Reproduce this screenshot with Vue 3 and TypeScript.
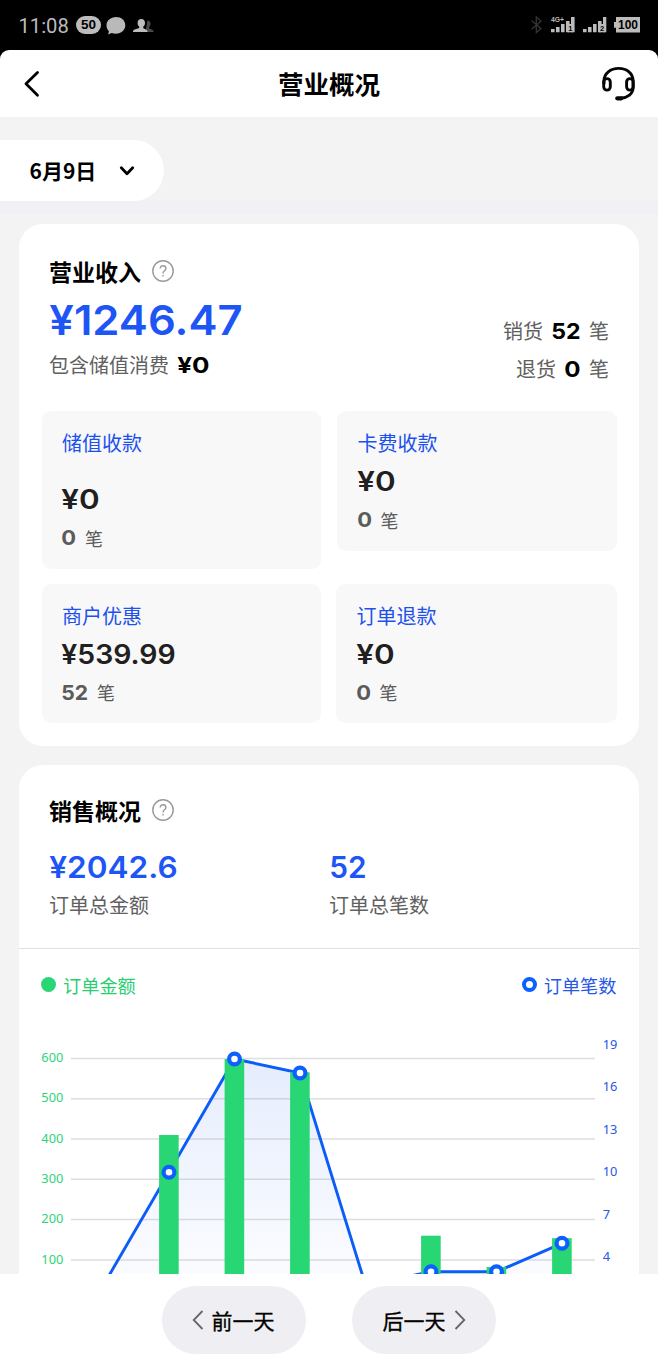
<script setup lang="ts">
import { h } from 'vue'

interface NumProps {
  value: string
  w: number
  cap: number
  weight?: number
}

const Num = (p: NumProps) =>
  h('svg', { width: p.w, height: p.cap, viewBox: `0 0 ${p.w} ${p.cap}`, style: { overflow: 'visible', display: 'block' } }, [
    h('text', {
      x: -0.7,
      y: p.cap,
      'font-family': 'Inter, "Liberation Sans", sans-serif',
      'font-size': p.cap / 0.727,
      'font-weight': p.weight ?? 600,
      fill: 'currentColor',
      textLength: p.w + 1.3,
      lengthAdjust: 'spacingAndGlyphs',
    }, p.value),
  ])
Num.props = ['value', 'w', 'cap', 'weight']

const tiles = [
  { label: '储值收款', amount: '¥0', aw: 37, count: '0', cw: 13.5, kind: 'tall' },
  { label: '卡费收款', amount: '¥0', aw: 37, count: '0', cw: 13.5, kind: 'inset' },
  { label: '商户优惠', amount: '¥539.99', aw: 113, count: '52', cw: 25.5, kind: '' },
  { label: '订单退款', amount: '¥0', aw: 37, count: '0', cw: 13.5, kind: '' },
]

const amountTicks = [600, 500, 400, 300, 200, 100].map((value, i) => ({ value, y: 109.4 + i * 40.3 }))
const countTicks = [19, 16, 13, 10, 7, 4].map((value, i) => ({ value, y: 95.5 + i * 42.5 }))

const points = [
  { x: 84.5, y: 336, top: 340 },
  { x: 150, y: 223.3, top: 186 },
  { x: 215.5, y: 110, top: 110 },
  { x: 281, y: 124, top: 123.3 },
  { x: 346.5, y: 336, top: 340 },
  { x: 412, y: 322.8, top: 286.7 },
  { x: 477.5, y: 322.8, top: 318 },
  { x: 543, y: 294.3, top: 289.2 },
]
const line = points.map((p) => `${p.x},${p.y}`).join(' ')
const area = `${points[0].x},345 ${line} ${points[points.length - 1].x},345`
</script>

<template>
  <div class="screen">
    <div class="status">
      <div class="st-left">
        <span class="time">11:08</span>
        <span class="pill">50</span>
        <svg class="bubble" width="20" height="18" viewBox="0 0 20 18">
          <path d="M10 0C4.700 0 .5 3.600.5 8.300c0 2.500 1 4.500 2.400 6L2.200 17.600l3.500-1.700c1.300.5 2.800.8 4.300.8 5.300 0 9.300-3.600 9.300-8.400S15.300 0 10 0z" fill="#b9b9b9" />
        </svg>
        <svg class="people" width="21" height="14" viewBox="0 0 21 14">
          <path d="M14.500 1.500c2 0 3 1.400 3 3.300 0 1.500-.6 2.600-1.400 3.300v1.300l3.700 1.600c.5.300.7.900.7 1.900h-8z" fill="#4a4a4a" />
          <path d="M8.300 0c2.200 0 3.700 1.600 3.700 3.900 0 1.600-.7 2.900-1.700 3.700v1.700l2.700 1.200c1 .5 1.500 1.200 1.500 2.500H0c0-1.200.4-2 1.600-2.400l4.600-1.500V7.600C5.200 6.800 4.600 5.500 4.600 3.900 4.600 1.600 6.100 0 8.300 0z" fill="#bdbdbd" />
        </svg>
      </div>
      <svg class="st-right" width="112" height="20" viewBox="0 0 112 20">
        <path d="M1.500 5.500l9.500 8-4.700 4V2L11 6.200l-9.500 8" fill="none" stroke="#343434" stroke-width="1.300" />
        <g fill="#bcbcbc">
          <path d="M21 14h3.600v3.300H21zM26 12h3.600v5.300H26zM31 9h3.600v8.300H31zM36 6h3.600v11.300H36zM41 2h3.600v15.300H41z" />
          <path d="M53 14h3.600v3.300H53zM58 12h3.600v5.300H58zM63 9h3.600v8.300H63zM68 6h3.600v11.300H68zM73 2h3.300v15.300H73z" />
          <path d="M38 9h5v8.300h-5zM69 9h6v8.300h-6z" />
          <path d="M86 2h24v15.500H86v-4.700h-2V7h2z" />
          <text x="21" y="6.600" font-family="Liberation Sans, sans-serif" font-size="7" font-weight="700" textLength="13" lengthAdjust="spacingAndGlyphs">4G+</text>
        </g>
        <g fill="#000" font-family="Liberation Sans, sans-serif" font-weight="700">
          <text x="38.300" y="15.800" font-size="7.500">1</text>
          <text x="70" y="15.800" font-size="7.500">2</text>
          <text x="88" y="13.800" font-size="12" textLength="20" lengthAdjust="spacingAndGlyphs">100</text>
        </g>
      </svg>
    </div>

    <header class="header">
      <svg width="36" height="36" viewBox="0 0 36 36" class="back"><path d="M22.500 6.500L11 17.800l11.500 11.400" fill="none" stroke="#000" stroke-width="2.800" stroke-linecap="round" stroke-linejoin="round" /></svg>
      <h1>营业概况</h1>
      <svg width="36" height="38" viewBox="0 0 36 38" class="headset" fill="none" stroke="#050505" stroke-width="2.900">
        <path d="M3 19v-3.300C3 8.300 9.500 3.400 17.700 3.400s14.400 4.800 14.400 12.600v6.500c0 6.500-5.500 10.300-12.600 10.800" />
        <rect x="2.700" y="13.600" width="6.600" height="11.500" rx="3.300" />
        <rect x="25.600" y="13.600" width="6.600" height="11.500" rx="3.300" />
        <path d="M16.300 33.300h4" stroke-width="4.200" stroke-linecap="round" />
      </svg>
    </header>

    <main class="body">
      <button class="date">
        <span>6月9日</span>
        <svg width="16" height="12" viewBox="0 0 16 12"><path d="M2.300 2.800L8 8.800l5.700-6" fill="none" stroke="#000" stroke-width="2.800" stroke-linecap="round" stroke-linejoin="round" /></svg>
      </button>
      <div class="band"></div>

      <section class="card income">
        <div class="title">
          <h2>营业收入</h2>
          <svg width="22" height="22" viewBox="0 0 22 22" fill="none" stroke="#999" stroke-width="1.400"><circle cx="11" cy="11" r="10.200" /><path d="M8.200 8.600c0-1.800 1.100-2.900 2.800-2.900s2.900 1.100 2.900 2.700c0 2.300-2.900 2.300-2.900 5M11 15v1.600" /></svg>
        </div>
        <div class="summary">
          <div>
            <Num class="total" value="¥1246.47" :w="192" :cap="30" />
            <p class="stored"><span>包含储值消费</span><Num value="¥0" :w="31" :cap="16" :weight="700" /></p>
          </div>
          <div class="trades">
            <p><span>销货</span><Num value="52" :w="28" :cap="16" :weight="700" /><span>笔</span></p>
            <p><span>退货</span><Num value="0" :w="15" :cap="16" :weight="700" /><span>笔</span></p>
          </div>
        </div>
        <div class="tiles">
          <div v-for="t in tiles" :key="t.label" class="tile" :class="t.kind">
            <h3>{{ t.label }}</h3>
            <Num class="amount" :value="t.amount" :w="t.aw" :cap="19.500" :weight="570" />
            <p><Num :value="t.count" :w="t.cw" :cap="15" :weight="650" /><span>笔</span></p>
          </div>
        </div>
      </section>

      <section class="card sales">
        <div class="title">
          <h2>销售概况</h2>
          <svg width="22" height="22" viewBox="0 0 22 22" fill="none" stroke="#999" stroke-width="1.400"><circle cx="11" cy="11" r="10.200" /><path d="M8.200 8.600c0-1.800 1.100-2.900 2.800-2.900s2.900 1.100 2.900 2.700c0 2.300-2.900 2.300-2.900 5M11 15v1.600" /></svg>
        </div>
        <div class="stats">
          <div><Num value="¥2042.6" :w="127" :cap="21.500" /><p>订单总金额</p></div>
          <div><Num value="52" :w="36" :cap="21.500" /><p>订单总笔数</p></div>
        </div>
        <div class="plot">
          <div class="legend">
            <span class="lg green"><i></i>订单金额</span>
            <span class="lg blue"><i></i>订单笔数</span>
          </div>
          <svg class="chart" width="620" height="325" viewBox="0 0 620 325">
            <defs>
              <linearGradient id="fade" x1="0" y1="110" x2="0" y2="345" gradientUnits="userSpaceOnUse">
                <stop offset="0" stop-color="#2563eb" stop-opacity=".12" />
                <stop offset="1" stop-color="#2563eb" stop-opacity=".01" />
              </linearGradient>
            </defs>
            <line v-for="t in amountTicks" :key="t.value" x1="52" x2="576" :y1="t.y" :y2="t.y" stroke="#dedede" stroke-width="1.500" />
            <polygon :points="area" fill="url(#fade)" />
            <polyline :points="line" fill="none" stroke="#0b5cf9" stroke-width="2.900" />
            <rect v-for="p in points" :key="p.x" :x="p.x - 9.900" :y="p.top" width="19.600" :height="345 - p.top" fill="#28d674" />
            <circle v-for="p in points" :key="p.x" :cx="p.x" :cy="p.y" r="5.400" fill="#fff" stroke="#0c61fc" stroke-width="4.200" />
            <g class="tick">
              <text v-for="t in amountTicks" :key="t.value" x="44.300" :y="t.y + 3.700" text-anchor="end" fill="#2ed478">{{ t.value }}</text>
              <text v-for="t in countTicks" :key="t.value" x="583.700" :y="t.y + 4.300" fill="#2858e6">{{ t.value }}</text>
            </g>
          </svg>
        </div>
      </section>
    </main>

    <footer class="footer">
      <button class="prev"><svg width="12" height="22" viewBox="0 0 12 22"><path d="M10.500 2L1.700 11l8.800 9" fill="none" stroke="#66666a" stroke-width="1.800" /></svg><span>前一天</span></button>
      <button><span>后一天</span><svg width="12" height="22" viewBox="0 0 12 22"><path d="M1.500 2l8.800 9-8.800 9" fill="none" stroke="#66666a" stroke-width="1.800" /></svg></button>
    </footer>
  </div>
</template>

<style>
body {
  margin: 0;
  background: #000;
}
</style>

<style scoped>
.screen {
  width: 658px;
  height: 1366px;
  overflow: hidden;
  display: flex;
  flex-direction: column;
  background: #000;
  color: #000;
  font-family: "Noto Sans CJK SC", sans-serif;
}
h1, h2, h3, p { margin: 0; }
button { border: 0; padding: 0; font: inherit; color: inherit; }
.status {
  height: 50px;
  flex: none;
  display: flex;
  justify-content: space-between;
}
.st-left { display: flex; align-items: flex-start; padding: 16px 0 0 18.500px; }
.time {
  width: 57.500px;
  font: 400 20.200px/20px Roboto, sans-serif;
  color: #bcbcbc;
}
.pill {
  width: 25px;
  height: 18px;
  border-radius: 9px;
  background: #bcbcbc;
  color: #000;
  font: 700 13.500px/18px "Liberation Sans", sans-serif;
  text-align: center;
}
.bubble { margin: 1px 0 0 5px; }
.people { margin: 3px 0 0 7px; }
.st-right { margin: 15px 16px 0 0; }
.header {
  height: 67px;
  flex: none;
  display: flex;
  align-items: center;
  justify-content: space-between;
  background: #fff;
  border-radius: 9px 9px 0 0;
}
.back { margin-left: 15px; }
.headset { margin-right: 21px; }
h1 { font-size: 25.500px; line-height: 36px; font-weight: 700; padding: 0 6px 2px 0; }
.header h1 { margin-left: 12px; }
.body {
  height: 1157px;
  flex: none;
  overflow: hidden;
  background: #f3f3f3;
  padding-top: 23px;
  box-sizing: border-box;
}
.date {
  width: 164px;
  height: 61px;
  box-sizing: border-box;
  padding-left: 29.500px;
  display: flex;
  align-items: center;
  gap: 22.500px;
  border-radius: 0 31px 31px 0;
  background: #fff;
  font-size: 21px;
  font-weight: 700;
}
.date span { padding-bottom: 2px; }
.band { height: 13px; margin-bottom: 10px; background: #f0f1f4; }
.card {
  width: 620.500px;
  margin-left: 18.500px;
  box-sizing: border-box;
  background: #fff;
  border-radius: 24px;
}
.income { height: 522px; padding-top: 30px; }
.title {
  height: 34px;
  display: flex;
  align-items: center;
  gap: 11px;
  padding-left: 30.500px;
}
h2 { font-size: 23px; line-height: 34px; font-weight: 700; }
.summary {
  height: 123px;
  display: flex;
  justify-content: space-between;
  padding: 0 30px 0 31.500px;
  color: #000;
}
.total { margin-top: 17px; color: #1d56f5; }
.summary p { display: flex; align-items: center; height: 30px; font-size: 20px; line-height: 30px; }
.summary p span { color: #606060; }
.summary .stored { margin: 15px 0 0 -1px; gap: 9px; }
.trades { display: flex; flex-direction: column; align-items: flex-end; padding-top: 28px; }
.trades p { gap: 9px; }
.trades p + p { margin-top: 8px; }
.tiles {
  display: grid;
  grid-template-columns: 279.500px 281px;
  column-gap: 15px;
  row-gap: 15px;
  padding-left: 23px;
  align-items: start;
}
.tile {
  height: 139.500px;
  box-sizing: border-box;
  padding: 18px 0 0 20.500px;
  border-radius: 9px;
  background: #f8f8f8;
}
.tile.tall { height: 157.500px; }
.tile.inset { margin-left: 1px; }
.tile h3 { font-size: 20px; line-height: 28px; font-weight: 400; color: #1c51ed; }
.amount { margin-top: 14px; color: #202020; }
.tall .amount { margin-top: 32px; }
.tile p { display: flex; align-items: center; gap: 9.500px; height: 24px; margin-top: 17px; color: #5b5b5b; }
.tile p span { font-size: 18px; line-height: 24px; }
.sales { margin-top: 19px; height: 530px; padding-top: 28px; }
.stats {
  height: 122px;
  box-sizing: border-box;
  display: flex;
  padding: 29px 0 0 31.500px;
  color: #1d56f5;
  border-bottom: 1px solid #dfdfdf;
}
.stats > div { width: 280px; }
.stats p { margin: 13px 0 0 -1px; font-size: 20px; line-height: 28px; color: #606060; }
.plot { display: grid; }
.legend, .chart { grid-area: 1 / 1; }
.legend {
  display: flex;
  justify-content: space-between;
  align-self: start;
  padding: 22px 22.500px 0 22.500px;
}
.lg { display: flex; align-items: center; gap: 7px; font-size: 18.200px; line-height: 28px; }
.lg i { width: 15px; height: 15px; box-sizing: border-box; border-radius: 50%; margin-bottom: 1px; }
.green { color: #2ace72; }
.green i { background: #28d674; }
.blue { color: #2858e6; }
.blue i { border: 4.200px solid #0c61fc; }
.tick text { font: 400 12.800px "Noto Sans", sans-serif; }
.footer {
  height: 92px;
  flex: none;
  box-sizing: border-box;
  padding-top: 12px;
  display: flex;
  justify-content: center;
  gap: 46px;
  background: #fff;
}
.footer button {
  width: 144px;
  height: 68px;
  display: flex;
  align-items: center;
  justify-content: center;
  gap: 8px;
  border-radius: 34px;
  background: #efeff3;
  font-size: 21px;
  -webkit-text-stroke: .3px #000;
}
.footer .prev { padding-right: 2px; }
</style>
